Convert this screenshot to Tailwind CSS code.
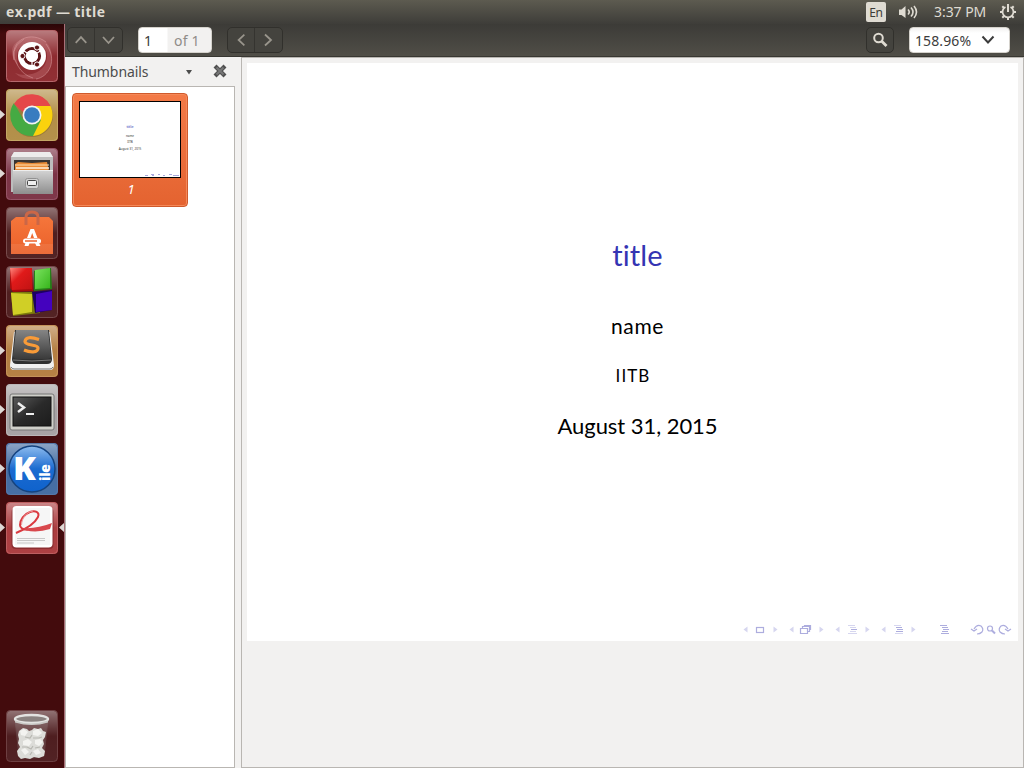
<!DOCTYPE html>
<html lang="en">
<head>
<meta charset="utf-8">
<title>ex.pdf — title</title>
<script src="https://cdn.jsdelivr.net/npm/@tailwindcss/browser@4"></script>
</head>
<body class="w-[1024px] h-[768px] overflow-hidden flex flex-col bg-[#f2f1f0] font-['Noto_Sans',sans-serif]">
<svg width="0" height="0" class="absolute">
  <defs>
    <linearGradient id="gloss" x2="0" y2="1"><stop offset="0" stop-color="#fff" stop-opacity=".4"/><stop offset=".5" stop-color="#fff" stop-opacity=".03"/><stop offset="1" stop-color="#fff" stop-opacity=".05"/></linearGradient>
    <linearGradient id="silver" x2="0" y2="1"><stop offset="0" stop-color="#d4d4d4"/><stop offset="1" stop-color="#8e8e8e"/></linearGradient>
    <linearGradient id="orange" x2="0" y2="1"><stop offset="0" stop-color="#f5763b"/><stop offset="1" stop-color="#ea602a"/></linearGradient>
    <linearGradient id="dark" x2="0" y2="1"><stop offset="0" stop-color="#858585"/><stop offset="1" stop-color="#3a3a3a"/></linearGradient>
    <linearGradient id="screen" x2="1" y2="1"><stop offset="0" stop-color="#5a5a5a"/><stop offset=".5" stop-color="#2a2a2a"/><stop offset="1" stop-color="#1c1c1c"/></linearGradient>
    <linearGradient id="blue" x2="0" y2="1"><stop offset="0" stop-color="#8dbbee"/><stop offset=".5" stop-color="#1b6bd0"/><stop offset="1" stop-color="#0f62cc"/></linearGradient>
    <linearGradient id="red" x2="1" y2="1"><stop offset="0" stop-color="#ff8a80"/><stop offset=".4" stop-color="#e01a1a"/><stop offset="1" stop-color="#c01313"/></linearGradient>
    <linearGradient id="green" x2="1" y2="1"><stop offset="0" stop-color="#7be35f"/><stop offset="1" stop-color="#37b51c"/></linearGradient>
  </defs>
</svg>
<header class="h-6 shrink-0 flex items-center bg-linear-to-b from-[#5d5b50] to-[#3e3d39] pl-[6px] pr-[7px] text-[#dfdbd2]">
  <span class="font-['Open_Sans',sans-serif] font-bold text-[14px] leading-6 tracking-[0.4px] whitespace-nowrap">ex.pdf — title</span>
  <div class="ml-auto flex items-center">
    <span class="w-5 h-5 rounded-[2px] bg-[#dfdbd2] text-[#3c3b37] text-[12px] leading-[21px] text-center tracking-[-0.4px]">En</span>
    <svg class="ml-3 w-[22px] h-[18px]" viewBox="0 0 22 18" fill="none" stroke="#dfdbd2" stroke-width="1.6"><path d="M1 6.500h2.500L7.500 3v12L3.500 12H1z" fill="#dfdbd2" stroke="none"/><path d="M10 6.500q2.500 2.500 0 5M13 4.500q4 4.500 0 9M16 3q5 6 0 12"/></svg>
    <span class="ml-[14px] w-[54px] text-[14px] leading-6 tracking-[-0.05px] whitespace-nowrap">3:37 PM</span>
    <svg class="ml-[11px] w-[18px] h-[18px]" viewBox="0 0 18 18" fill="none" stroke="#dfdbd2"><path d="M6.500 4A5.500 5.500 0 1 0 11.500 4" stroke-width="1.800"/><path d="M9 1v8M1 9h3M14 9h3M9 14v3M3.300 3.300l2 2M14.700 3.300l-2 2M3.300 14.700l2-2M14.700 14.700l-2-2" stroke-width="2"/></svg>
  </div>
</header>
<div class="flex flex-1 min-h-0">
  <nav class="relative w-[65px] shrink-0 flex flex-col items-center gap-[7px] pt-[6px] pr-px bg-linear-to-b from-[#2a0607] to-[#430b0d] to-[10px] border-r border-[#a97078]">
    <svg class="size-[52px]" viewBox="0 0 52 52"><rect width="52" height="52" rx="4" fill="#8b252a"/><rect x=".5" y=".5" width="51" height="51" rx="4" fill="url(#gloss)" stroke="#b4686c"/><g fill="#d88b8f" opacity=".28"><path d="M8 30C4 8 26 1 40 12c7 7 7 16 3 25 1-11-3-20-10-23-12-4-24 4-25 16z"/><path d="M40 14c12 16 3 33-10 35-9 1-16-1-21-6 13 5 30 0 32-15 0-6 0-10-1-14z"/><path d="M12 36C0 22 7 9 21 9c-8 5-12 12-9 27z"/></g><g fill="none" stroke="#dfa3a6" opacity=".5"><path d="M8 30C4 8 26 1 40 12M40 14c12 16 3 33-10 35M12 36Q1 20 18 9M12 36q5 9 15 12"/></g><circle cx="26" cy="26" r="14" fill="#fff"/><circle cx="26" cy="26" r="7.600" fill="none" stroke="#5c1517" stroke-width="3"/><path d="M26 26l8.500-5M26 26v10M26 26l-8-5" stroke="#fff" stroke-width="1.200"/><circle cx="26" cy="26" r="6" fill="#fff"/><g fill="#5c1517" stroke="#fff"><circle cx="16.500" cy="26" r="2.600"/><circle cx="31" cy="17.500" r="2.600"/><circle cx="31" cy="34.500" r="2.600"/></g></svg>
    <svg class="size-[52px]" viewBox="0 0 52 52"><rect width="52" height="52" rx="4" fill="#b08b42"/><rect x=".5" y=".5" width="51" height="51" rx="4" fill="url(#gloss)" stroke="#c4a766"/><circle cx="26" cy="27" r="21" fill="#745a26" opacity=".4"/><path d="M26 17h18.500A21 21 0 0 1 26 47l9-17z" fill="#fbd20d"/><path d="M8 14A21 21 0 0 0 27 47l8-16-9 3-9-4z" fill="#45aa43"/><path d="M8 15a21 21 0 0 1 36.500 2H26l-8 7z" fill="#e54749"/><circle cx="26" cy="26" r="9.500" fill="#f4f4f4"/><circle cx="26" cy="26" r="7.800" fill="#397cc0"/></svg>
    <svg class="size-[52px]" viewBox="0 0 52 52"><rect width="52" height="52" rx="4" fill="#782d40"/><rect x=".5" y=".5" width="51" height="51" rx="4" fill="url(#gloss)" stroke="#955466"/><path d="M8 4h36l3 5v35H5V9z" fill="#bdbdbd"/><path d="M8 4h36l3 5H5z" fill="#ececec"/><path d="M8 12h36v11H8z" fill="#393431"/><path d="M12 14l14 1 15-1 2 9H9V16z" fill="#e98b36"/><path d="M9 17h34" stroke="#ffe1b2"/><path d="M10 20h33" stroke="#fff0dc" stroke-width="1.500"/><path d="M7 22h40v24H7z" fill="url(#silver)"/><path d="M7 22.500h40" stroke="#eee"/><rect x="19.500" y="30.500" width="13" height="10" rx="2" fill="#d2d2d2" stroke="#929292"/><rect x="21.500" y="32.500" width="9" height="5" rx="1" fill="#eee" stroke="#444"/></svg>
    <svg class="size-[52px]" viewBox="0 0 52 52"><rect width="52" height="52" rx="4" fill="#4a1819"/><rect x=".5" y=".5" width="51" height="51" rx="4" fill="url(#gloss)" stroke="#764a4b"/><path d="M5 14l5-4h33l4 4v33H5z" fill="url(#orange)"/><path d="M5 37h42v10H5z" fill="#fff" opacity=".08"/><path d="M20 18V10q0-5 6-5t6 5v8" fill="none" stroke="#cb6747" stroke-width="3"/><path d="M24.500 22h3.500l3.500 9h-3.500l-1.800-5-1.700 5H21zM19.500 36h4l-1 3h-4zM29 36h4l1.500 3h-4z" fill="#fff"/><rect x="17" y="31.500" width="18" height="5" rx="2.500" fill="#fff"/><path d="M19 34h12" stroke="#ed622c" stroke-width="1.500"/></svg>
    <svg class="size-[52px]" viewBox="0 0 52 52"><rect width="52" height="52" rx="4" fill="#4a1819"/><rect x=".5" y=".5" width="51" height="51" rx="4" fill="url(#gloss)" stroke="#764a4b"/><path d="M4 2l22 1 1 22-20 1-3-4z" fill="#a60d0d"/><path d="M4 2h22v21l-20 1z" fill="url(#red)"/><path d="M28 5l17-3 1 21-18 2z" fill="#267e18"/><path d="M29 4l15-2v20l-15 1z" fill="url(#green)"/><path d="M5 26h21l9 2-1 19-27 3z" fill="#7c7b0c"/><path d="M5 27l21 1v18L7 49z" fill="#d0cf26"/><path d="M26 26l20-2v20l-17 3z" fill="#1c0064"/><path d="M30 28l16-3v19l-16 2z" fill="#4402be"/></svg>
    <svg class="size-[52px]" viewBox="0 0 52 52"><rect width="52" height="52" rx="4" fill="#b27a3c"/><rect x=".5" y=".5" width="51" height="51" rx="4" fill="url(#gloss)" stroke="#c4925a"/><path d="M8 7q18-3 36 0l4 33q0 5-4 5H8q-4 0-4-5z" fill="#f0f0f0"/><path d="M5 42q1 2 3 2h36q2 0 3-2" stroke="#777" fill="none"/><path d="M9 5h34l3 29q0 5-5 5H11q-5 0-5-5z" fill="#303030"/><path d="M10 5h32l3 25q0 4-4 4H11q-4 0-4-4z" fill="url(#dark)"/><path d="M7 35q19 2 38 0" stroke="#777" fill="none"/><path d="M33 14.500Q20 10 19 16.500c0 4.500 13 2.500 13 6.500 0 5-8 4.500-14 2" fill="none" stroke="#f99b38" stroke-width="3.200"/></svg>
    <svg class="size-[52px]" viewBox="0 0 52 52"><rect width="52" height="52" rx="4" fill="#a49fa1"/><rect x=".5" y=".5" width="51" height="51" rx="4" fill="url(#gloss)" stroke="#bcb7b9"/><rect x="4" y="10" width="44" height="36" rx="2" fill="#cfcfc9" stroke="#777"/><rect x="7" y="13" width="38" height="29" fill="url(#screen)" stroke="#111"/><path d="M12 19l6 4.500-6 4.500" fill="none" stroke="#eee" stroke-width="2.500"/><path d="M20 30h8" stroke="#eee" stroke-width="2"/></svg>
    <svg class="size-[52px]" viewBox="0 0 52 52"><rect width="52" height="52" rx="4" fill="#3e68a0"/><rect x=".5" y=".5" width="51" height="51" rx="4" fill="url(#gloss)" stroke="#5879a8"/><circle cx="26" cy="26" r="23" fill="url(#blue)" stroke="#15437f" stroke-width="1.500"/><text x="7" y="37" fill="#fff" font-family="Open Sans" font-weight="800" font-size="31" textLength="23" lengthAdjust="spacingAndGlyphs">K</text><text transform="translate(43.500 38) rotate(-90)" fill="#fff" font-family="Open Sans" font-weight="800" font-size="14" textLength="17">ile</text></svg>
    <svg class="size-[52px]" viewBox="0 0 52 52"><rect width="52" height="52" rx="4" fill="#a9373a"/><rect x=".5" y=".5" width="51" height="51" rx="4" fill="url(#gloss)" stroke="#bd5f61"/><rect x="5.500" y="6" width="42" height="41" rx="4" fill="#762327" opacity=".6"/><rect x="6.500" y="4" width="40" height="41.500" rx="4" fill="#fff"/><path d="M9 6h35v37H9z" fill="#f6f6f6"/><path d="M10 31C20 27 29 21 32 15c2-5-3-7-8-5-6 2-10 8-10 13 0 3 3 4.500 8 4.500" fill="none" stroke="#da3a40" stroke-width="2"/><path d="M15.500 23C16 16 20 10 27 9" fill="none" stroke="#ef9a9c"/><path d="M17 26q14 1 29-5l-2 6q-12 4-24 1.500z" fill="#d8484d"/><path d="M11 36.500h28M11 38.500h28M11 41h17" stroke="#c8c8c8"/></svg>
    <svg class="mt-auto mb-[6px] size-[52px]" viewBox="0 0 52 52"><rect width="52" height="52" rx="4" fill="#491719"/><rect x=".5" y=".5" width="51" height="51" rx="4" fill="url(#gloss)" stroke="#6d3f41"/><path d="M9 9l4 37q12 4 25 0l4-37z" fill="#bbb" opacity=".2" stroke="#aaa"/><path d="M13 21l4-3 4 1 2 2 3-1 2-2 4 1 3-1 2 3 3 1-1 5-2 3 1 4-2 4 3 3-1 5-5 2-5-1-4 2-5-1-4 1-3-3-1-5 3-4-2-4 1-4-1-4z" fill="#dcdcd8"/><path d="M14 21l4-2 4 3-3 4-4-1zM27 21l5-2 4 4-4 3-5-1zM17 31l5-2 4 3-3 4-6-1zM29 30l5-1 3 3-4 4-4-2zM15 40l4-2 4 4-4 3zM27 41l5-2 3 4-5 2z" fill="#f3f3f0"/><path d="M19 27l5 1 2-3M27 28l6 0 3-1M16 37l5 0 4 2 2-3M29 38l5-1M24 45l2-3" fill="none" stroke="#b7b7b1" stroke-width="1.200"/><ellipse cx="25.500" cy="9" rx="16.500" ry="4" fill="#8b8381" stroke="#e3e3e1" stroke-width="2.400"/><path d="M9 10.500q16 6 33 0v2q-16 5-33 0z" fill="#c9c9c6"/></svg>
    <svg class="absolute left-0 top-0 w-16 h-[744px]" viewBox="0 24 64 744" fill="#ded8d5"><path d="M0 110v9l5-4.500zM0 169v9l5-4.500zM0 346v9l5-4.500zM0 405v9l5-4.500zM0 464v9l5-4.500zM0 523v9l5-4.500zM64 523v9l-5-4.500z"/></svg>
  </nav>
  <main class="flex flex-col flex-1 min-w-0">
    <div class="h-[33px] shrink-0 flex items-center bg-linear-to-b from-[#3c3b37] to-[#504e47] border-b border-[#383732] pl-[2px] pr-[14px]">
      <div class="flex w-14 h-[26px] rounded-[5px] border border-[#31302c] bg-[#44433e] divide-x divide-[#353430]">
        <svg class="w-[27px] h-6" viewBox="0 0 27 24" fill="none" stroke="#99958c" stroke-width="1.800"><path d="M8 15l5.500-6 5.500 6"/></svg>
        <svg class="w-[27px] h-6" viewBox="0 0 27 24" fill="none" stroke="#99958c" stroke-width="1.800"><path d="M8 9l5.500 6L19 9"/></svg>
      </div>
      <div class="ml-[15px] w-[74px] h-[26px] rounded-[4px] border border-[#d5d2cc] bg-linear-to-r from-white from-[28px] to-[#f2f1f0] to-[29px] flex items-center text-[14px] text-[#3c3c3c]">
        <span class="w-[35px] pl-[5px]">1</span><span class="text-[#8f8c88] tracking-[0.2px] whitespace-nowrap">of 1</span>
      </div>
      <div class="ml-[15px] flex w-14 h-[26px] rounded-[5px] border border-[#31302c] bg-[#44433e] divide-x divide-[#353430]">
        <svg class="w-[27px] h-6" viewBox="0 0 27 24" fill="none" stroke="#99958c" stroke-width="1.800"><path d="M17 6.500L11 12l6 5.500"/></svg>
        <svg class="w-[27px] h-6" viewBox="0 0 27 24" fill="none" stroke="#99958c" stroke-width="1.800"><path d="M10 6.500l6 5.500-6 5.500"/></svg>
      </div>
      <div class="ml-auto w-7 h-[26px] rounded-[5px] border border-[#31302c] bg-[#44433e]">
        <svg class="w-[26px] h-6" viewBox="0 0 26 24" fill="none" stroke="#dfdbd2"><circle cx="11.500" cy="10" r="4.300" stroke-width="2"/><path d="M14.500 13l5 5" stroke-width="2.800"/></svg>
      </div>
      <div class="ml-[15px] w-[101px] h-[26px] rounded-[4px] border border-[#d5d2cc] bg-linear-to-b from-[#f2f1f0] to-white to-[5px] flex items-center pl-[5px] text-[14px] text-[#3c3c3c]">
        <span class="w-[66px] tracking-[0.1px]">158.96%</span>
        <svg class="w-[14px] h-[10px]" viewBox="0 0 14 10" fill="none" stroke="#3c3c3c" stroke-width="2"><path d="M1.500 1.500L7 7.500l5.500-6"/></svg>
      </div>
    </div>
    <div class="flex flex-1 min-h-0">
      <aside class="w-[170px] shrink-0 flex flex-col">
        <div class="h-[29px] shrink-0 flex items-center pl-[7px] text-[14px] text-[#4c4c4c]">
          <span class="w-[113px] tracking-[-0.08px]">Thumbnails</span>
          <svg class="w-[8px] h-[6px] mt-px" viewBox="0 0 8 6" fill="#4c4c4c"><path d="M1 1h6L4 5.500z"/></svg>
          <svg class="ml-[20px] mb-[2px] size-[14px]" viewBox="0 0 14 14" fill="none"><path d="M3.500 3.500l7 7M10.500 3.500l-7 7" stroke="#505050" stroke-width="4.200" stroke-linecap="square"/><path d="M3.500 3.500l7 7M10.500 3.500l-7 7" stroke="#777" stroke-width="2"/></svg>
        </div>
        <div class="flex-1 bg-white border border-[#b9b6b2] pl-[6px] pt-[6px]">
          <div class="w-[116px] h-[114px] rounded-[4px] border border-[#cf5a2c] bg-linear-to-b from-[#f37a47] to-[#e46330] shadow-[inset_0_0_0_1px_#f58858] flex flex-col items-center pt-[7px]">
            <div class="w-[102px] h-[77px] shrink-0 border border-black bg-white flex flex-col items-center relative text-[3px] leading-[4px] text-[#333]">
              <span class="mt-[23px] text-[4px] text-[#3434b3]">title</span><span class="mt-[5px]">name</span><span class="mt-[2px]">IITB</span><span class="mt-[3px]">August 31, 2015</span>
              <svg class="absolute right-0 bottom-0 w-[36px] h-[4px]" viewBox="0 0 36 4" stroke="#a9a9de"><path d="M1 2.500h3M7 1.500h3M8 2.500h2M14 1.500h2M19 2.500h2M25 1.500h3M29 2.500h6" /></svg>
            </div>
            <span class="mt-[2px] ml-[2px] text-[13px] leading-[18px] italic text-white">1</span>
          </div>
        </div>
      </aside>
      <section class="ml-[6px] flex-1 border border-[#b9b6b2] bg-[#f2f1f0] pt-[5px] pl-[5px]">
        <article class="w-[771px] h-[578px] bg-white flex flex-col items-center font-['Lato',sans-serif] text-black pt-[174px] pl-[10px]">
          <h1 class="h-9 text-[29px] leading-9 text-[#3434b3] tracking-[0.1px]">title</h1>
          <p class="mt-[37px] h-8 text-[21px] leading-8 tracking-[0.6px]">name</p>
          <p class="mt-[18px] -ml-[9px] h-8 text-[17px] leading-8 tracking-[1.1px]">IITB</p>
          <p class="mt-[18px] h-8 text-[22px] leading-8 tracking-[-0.05px] whitespace-nowrap">August 31, 2015</p>
          <svg class="mt-auto mb-[3px] self-end mr-[4px] w-[274px] h-4" viewBox="740 622 274 16" fill="none" stroke="#adadde" stroke-width="1.200">
            <path fill="#d6d6ef" stroke="none" d="M747.500 626.500v6l-4-3zM793.500 626.500v6l-4-3zM839.500 626.500v6l-4-3zM885.500 626.500v6l-4-3zM773.500 626.500v6l4-3zM819.500 626.500v6l4-3zM865.500 626.500v6l4-3zM911.500 626.500v6l4-3z"/>
            <rect x="756.500" y="627.500" width="7" height="5"/>
            <path d="M800.500 628.500h7v5h-7zM802.500 628v-1.500h7v5h-2M804.500 626v-.5h6v4h-1"/>
            <path stroke="#d6d6ef" d="M848 625.500h7M850 627.500h6M850 631.500h6M848 633.500h9M894 625.500h7M895 633.500h8"/>
            <path d="M851 629.500h6M896 627.500h6M897 629.500h6M896 631.500h7M940 625.500h7M942 627.500h6M943 629.500h6M942 631.500h6M941 633.500h8"/>
            <path d="M974 629q3-5 7-3 3 3 1 6-2 2-5 2M971 629l3 2 3-2M1008 629q-3-5-7-3-3 3-1 6 2 2 5 2M1011 629l-3 2-3-2"/>
            <circle cx="990" cy="628.500" r="2.500"/><path d="M992 630.500l3 3" stroke-width="2"/>
          </svg>
        </article>
      </section>
    </div>
  </main>
</div>
</body>
</html>
